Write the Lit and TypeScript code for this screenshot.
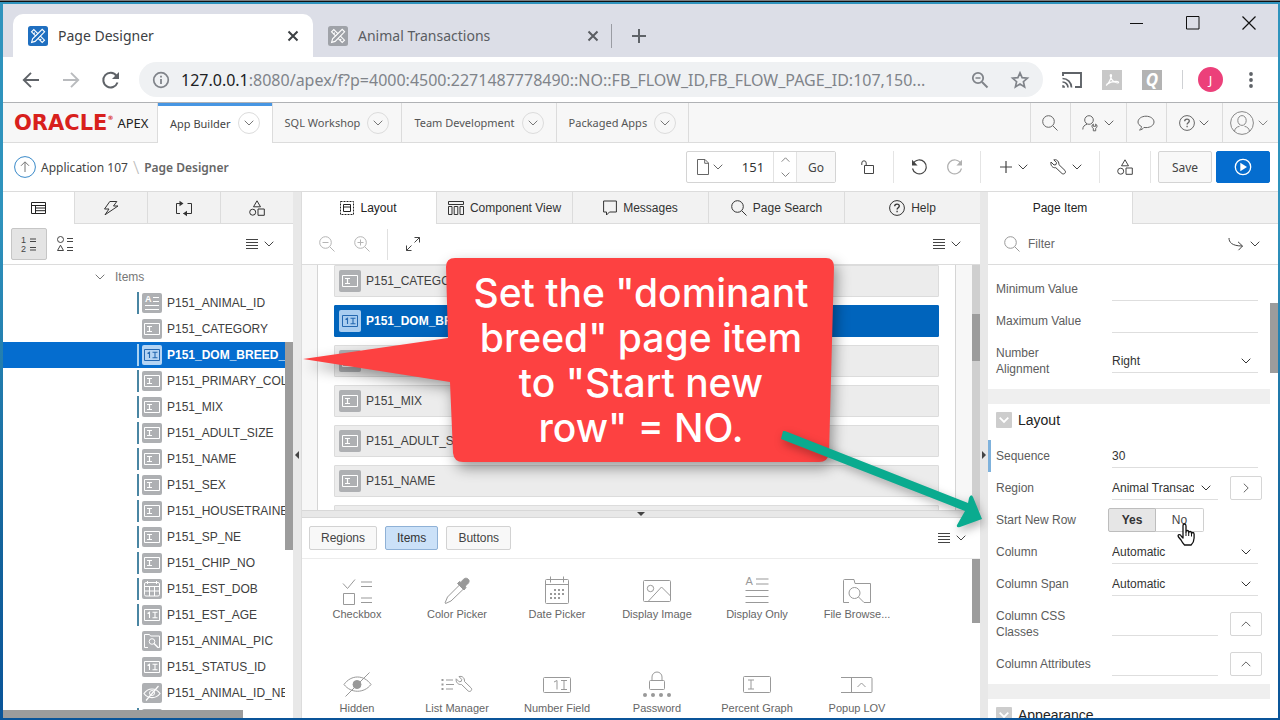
import { LitElement, html, css, svg, nothing, TemplateResult, SVGTemplateResult } from "lit";
import { customElement, property } from "lit/decorators.js";

interface Glyph {
  w: number;
  h: number;
  body: SVGTemplateResult;
}

const glyphs: Record<string, Glyph> = {
  chevron: { w: 10, h: 6, body: svg`<path d="M.7.7 5 5 9.3.7"/>` },
  chevronUp: { w: 10, h: 6, body: svg`<path d="M.7 5.2 5 .9 9.3 5.2"/>` },
  chevronRight: { w: 6, h: 10, body: svg`<path d="M.8.7 5.2 5 .8 9.3"/>` },
  fold: { w: 10, h: 6, body: svg`<path stroke-width="1.800" d="M.7.7 5 5 9.3.7"/>` },
  close: { w: 12, h: 12, body: svg`<path stroke-width="2" d="M1.5 1.5l9 9M10.5 1.5l-9 9"/>` },
  plusBold: { w: 16, h: 16, body: svg`<path stroke-width="2" d="M8 1v14M1 8h14"/>` },
  favicon: {
    w: 20, h: 20,
    body: svg`<rect width="20" height="20" rx="2.5" fill="currentColor" stroke="none"/><g stroke="#fff" stroke-width="1.1"><path d="M3.5 5.8 5.8 3.5 16.5 14.2 14.2 16.5z"/><path d="M5.5 8l1.3-1.3M8 10.500l1.300-1.300M12 14.200l1.300-1.300"/><path fill="currentColor" d="M3.600 16.400l1-3.500L14.200 3.400l2.400 2.400L7.100 15.400z"/></g>`,
  },
  back: { w: 18, h: 18, body: svg`<path stroke-width="1.900" d="M17 9H2M9 1.800 1.800 9 9 16.200"/>` },
  forward: { w: 18, h: 18, body: svg`<path stroke-width="1.900" d="M1 9h15M9 1.800 16.200 9 9 16.200"/>` },
  reload: { w: 18, h: 18, body: svg`<path stroke-width="2" d="M15.500 11.500a7.300 7.300 0 1 1-1-6.700"/><path fill="currentColor" stroke="none" d="M17 1v7h-7z"/>` },
  info: { w: 18, h: 18, body: svg`<circle cx="9" cy="9" r="7.300" stroke-width="1.700"/><path stroke-width="1.800" d="M9 8v5M9 4.800v1.800"/>` },
  zoomMinus: { w: 18, h: 18, body: svg`<circle cx="7" cy="7" r="5.200" stroke-width="1.800"/><path stroke-width="2" d="M11 11l5.500 5.500"/><path stroke-width="1.500" d="M4.500 7h5"/>` },
  star: { w: 18, h: 18, body: svg`<path stroke-width="1.700" d="M9 1.800l2.100 4.900 5.300.5-4 3.500 1.200 5.200L9 13.100l-4.600 2.800 1.200-5.200-4-3.500 5.300-.5z"/>` },
  cast: { w: 20, h: 18, body: svg`<path stroke-width="1.900" d="M1 5V2h18v14h-6"/><path stroke-width="1.700" d="M.5 7.500A9 9 0 0 1 9.500 16.500M.5 11A5.500 5.500 0 0 1 6 16.500"/><path stroke="none" fill="currentColor" d="M.300 14v2.700h2.700A2.700 2.700 0 0 0 .3 14z"/>` },
  pdf: { w: 20, h: 20, body: svg`<rect width="20" height="20" fill="#c8c8c8" stroke="none"/><path stroke="#fff" stroke-width="1.200" d="M4 15.500c2-1 5-6.500 5.500-9.500.3-2-1.500-2-1.200 0C8.800 9.500 12 12.500 15.500 13c1.500 0 1.500-1.400 0-1.500-3-.2-8 .8-11 3"/>` },
  more: { w: 4, h: 18, body: svg`<g fill="currentColor" stroke="none"><circle cx="2" cy="3" r="1.900"/><circle cx="2" cy="9" r="1.900"/><circle cx="2" cy="15" r="1.900"/></g>` },
  minimize: { w: 14, h: 14, body: svg`<path d="M0 7.500h13"/>` },
  maximize: { w: 14, h: 14, body: svg`<path d="M.5.5h12.500v12.500H.5z"/>` },
  windowClose: { w: 14, h: 14, body: svg`<path stroke-width="1.200" d="M.5.5l13 13M13.500.5l-13 13"/>` },
  search: { w: 16, h: 16, body: svg`<circle cx="6.500" cy="6.500" r="5.800"/><path d="M10.800 10.800l4.700 4.700"/>` },
  zoomOut: { w: 16, h: 16, body: svg`<circle cx="6.500" cy="6.500" r="5.800"/><path d="M10.800 10.800l4.700 4.700M3.500 6.500h6"/>` },
  zoomIn: { w: 16, h: 16, body: svg`<circle cx="6.500" cy="6.500" r="5.800"/><path d="M10.800 10.800l4.700 4.700M3.500 6.500h6M6.500 3.500v6"/>` },
  admin: { w: 18, h: 16, body: svg`<circle cx="7" cy="5" r="4.300"/><path d="M.8 14.500c0-3 1.700-4.500 4.200-5.300"/><path d="M11.300 9c-1.800 1-1.800 3.500 0 4.300v2.500h2.400v-2.500c1.800-.8 1.800-3.300 0-4.300v2.300h-2.400z"/>` },
  speech: { w: 18, h: 16, body: svg`<path d="M4.500 11.500C2.300 10.500 1 8.900 1 7c0-3.200 3.500-5.800 8-5.800S17 3.800 17 7s-3.500 5.600-8 5.600c-.7 0-1.300 0-2-.2C6 13.800 4.500 14.800 2.500 15c1.300-1 2-2.200 2-3.500z"/>` },
  help: { w: 16, h: 16, body: svg`<circle cx="8" cy="8" r="7.400"/><path stroke-width="1.300" d="M5.700 6.300c0-1.400 1-2.200 2.300-2.200s2.300.8 2.300 2c0 1.700-2.200 1.800-2.200 3.500M8.100 10.800v1.400"/>` },
  user: { w: 24, h: 24, body: svg`<circle cx="12" cy="12" r="11.400"/><ellipse cx="12" cy="9.500" rx="4.200" ry="4.900"/><path d="M4.500 20.300c.5-3 2-4.300 5-5M19.500 20.300c-.5-3-2-4.300-5-5"/>` },
  upCircle: { w: 22, h: 22, body: svg`<circle cx="11" cy="11" r="10.400" stroke="#3a8ac9"/><path stroke="#777" d="M11 16V6M7 9.800l4-4 4 4"/>` },
  page: { w: 12, h: 16, body: svg`<path d="M.5.5h7.500l3.500 3.500v11.500H.5zM7.700.6v3.700h3.700"/>` },
  unlock: { w: 14, h: 14, body: svg`<path d="M3.500 5.500h9v8h-9zM.8 5V3a2.200 2.200 0 0 1 4.400 0v2.300"/>` },
  undo: { w: 16, h: 16, body: svg`<path stroke-width="1.200" d="M2.200 4.500A7 7 0 1 1 1.500 9.500"/><path fill="currentColor" stroke="none" d="M1 .8v5.600h5.600z"/>` },
  redo: { w: 16, h: 16, body: svg`<path stroke-width="1.200" d="M13.800 4.500A7 7 0 1 0 14.500 9.500"/><path fill="currentColor" stroke="none" d="M15 .8v5.600H9.400z"/>` },
  plus: { w: 12, h: 12, body: svg`<path stroke-width="1.200" d="M6 0v12M0 6h12"/>` },
  wrench: { w: 16, h: 16, body: svg`<path d="M1 3l3 3 2-.4.500-2L3.800.8C6 .2 9 1.500 8.900 5.600L15 11.500c1.500 2-1 4.500-3 3L5.800 8.700C2.500 9.200.3 6.300 1 3z"/>` },
  shapes: { w: 16, h: 16, body: svg`<path d="M8 .8l3.500 6h-7zM9 9h6.300v6.300H9z"/><circle cx="3.700" cy="12.200" r="3"/>` },
  run: { w: 18, h: 18, body: svg`<circle cx="9" cy="9" r="7.700" stroke-width="1.300"/><path fill="currentColor" stroke="none" d="M6.300 4.800v8.400L13 9z"/>` },
  rendering: { w: 15, h: 12, body: svg`<path d="M.5.5h14v11H.5zM.5 3.500h14M4.500 3.500v8M4.500 6h10M4.500 8.700h10"/>` },
  bolt: { w: 16, h: 16, body: svg`<path d="M6.800 1.500h7L10.500 6h4.500L2 14.800 6 9H1.500z"/>` },
  process: { w: 18, h: 14, body: svg`<path d="M5 2.500H1.500v10h3.500M12.500 2.500h4v10H8.500"/><path fill="currentColor" stroke="none" d="M4.500-.2v5.400L8.500 2.500zM12 9.800v5.400L8 12.500z"/>` },
  menu: { w: 12, h: 10, body: svg`<path stroke-width="1.100" d="M0 .5h12M0 3.500h12M0 6.500h12M0 9.500h12"/>` },
  order: { w: 16, h: 16, body: svg`<g stroke="none" fill="currentColor" font-family="Liberation Sans" font-size="9"><text x="0" y="7">1</text><text x="0" y="16">2</text></g><path d="M9 3h6M9 5.500h6M9 11.500h6M9 14h6"/>` },
  group: { w: 16, h: 16, body: svg`<circle cx="3.500" cy="3.500" r="3"/><path d="M3.500 9.200l3 5.300h-6zM10 2.500h6M10 5.500h6M10 11.500h6M10 14.500h6"/>` },
  layout: { w: 14, h: 14, body: svg`<path stroke-dasharray="2 1" d="M.5.5h13v13H.5z"/><path d="M3.500 3.500h7v7h-7zM3.500 6h7"/>` },
  component: { w: 16, h: 14, body: svg`<path d="M.5.500h15v3H.5zM.5 5.500h3.500v8H.5zM6.200 5.500h3.600v8H6.200zM12 5.500h3.500v8H12z"/>` },
  message: { w: 14, h: 16, body: svg`<path d="M.6 1h12.800v11H6.500L3.500 15v-3H.6z"/>` },
  expand: { w: 16, h: 16, body: svg`<path d="M1.500 9.500v5h5M1.500 14.500l5-5M9.500 1.500h5v5M14.500 1.500l-5 5"/>` },
  goTo: { w: 16, h: 14, body: svg`<path d="M1 1c0 4 2.500 8 13.500 8M10 4.800l4.500 4.200L10.500 13.200"/>` },
  iText: { w: 20, h: 20, body: svg`<path d="M2.500 4.500h15v11h-15z"/><path stroke-width="1.200" d="M5 7.500h5M5 12.500h5M7.500 7.500v5"/>` },
  iNumber: { w: 20, h: 20, body: svg`<path d="M2.500 4.500h15v11h-15z"/><path stroke-width="1.100" d="M5.500 8.500l2-1.200v5.700M10.500 7.300h5M10.500 12.700h5M13 7.300v5.400"/>` },
  iDisplay: { w: 20, h: 20, body: svg`<text x="3" y="9" stroke="none" fill="currentColor" font-family="Liberation Sans" font-weight="700" font-size="9">A</text><path d="M11 4.500h6M11 8.500h6M3 12.500h14M3 16.500h14"/>` },
  iDate: { w: 20, h: 20, body: svg`<rect x="2.500" y="3.500" width="15" height="13.500" rx="1.500"/><path d="M2.500 7.500h15M2.500 12h15M7.500 7.500V17M12.500 7.500V17M5.500 2v3M14.500 2v3"/>` },
  iFile: { w: 20, h: 20, body: svg`<path d="M6 16.500H2.500v-13h5l1 1.500h9v11.500h-2"/><circle cx="10" cy="10.500" r="2.800"/><path stroke-width="1.400" d="M12 12.500l4 4"/>` },
  iHidden: { w: 20, h: 20, body: svg`<path stroke-width="1.200" d="M2 10.500c4-6 12-6 16 0-4 5.500-12 5.500-16 0zM4 17.500L16.500 3"/><circle cx="10" cy="10" r="2.500"/>` },
  gCheckbox: { w: 32, h: 30, body: svg`<path d="M2 8.500l4.500 5L14 4.500M20 7h11M20 11.500h11M2.500 18.500h11v11h-11zM20 23h11M20 27.500h11"/>` },
  gColor: { w: 32, h: 30, body: svg`<path d="M19 9.500L6.500 22l-2.500 6 .5.500 5.500-2.500L23 13.500"/><path fill="currentColor" d="M20 7.500c2-3.500 4.500-5.500 7-3.500s.5 5-3 7l1 1.500-2 2.500-6.500-6.500 2-2z"/>` },
  gDate: { w: 32, h: 30, body: svg`<rect x="4.500" y="4.500" width="23" height="24" rx="1"/><path d="M4.500 9.500h23M9.500 1.500v6M22.500 1.500v6"/><path stroke-width="2" stroke-dasharray="2 2" d="M13 15h11M9 19h14M9 23h10"/>` },
  gImage: { w: 32, h: 30, body: svg`<rect x="2.500" y="5.500" width="27" height="21" rx="1"/><circle cx="9.500" cy="13.500" r="3.200"/><path d="M7.500 26l13-14 9 9"/>` },
  gDisplay: { w: 32, h: 30, body: svg`<text x="4.500" y="10" stroke="none" fill="currentColor" font-family="Liberation Sans" font-size="11">A</text><path d="M15 4h12.500M15 9h12.500M4.500 15.500h23M4.500 21.500h23M4.500 27.500h23"/>` },
  gFile: { w: 32, h: 30, body: svg`<path d="M8 27.500H2.500V5.500q0-1 1-1h9.500l1 4h15.500v19h-3.500"/><circle cx="13.500" cy="18" r="5.500"/><path d="M17.500 22l5.500 5.500h3"/>` },
  gHidden: { w: 32, h: 30, body: svg`<path d="M3 15.500c7-10 20-10 27 0-7 9-20 9-27 0zM4.500 27.500L28.500 3.500"/><circle cx="16" cy="15.500" r="4" fill="currentColor"/>` },
  gList: { w: 32, h: 30, body: svg`<path stroke-width="2" stroke-dasharray="2 2.500" d="M1.500 10v11"/><path d="M5 11h7M5 15.500h8M5 20h7M15.200 9.800l3 3 2-.4.500-2L18 7.600c2.500-.8 5.800.6 5.500 4.900l6.700 6.500c1.500 2-1 4.500-3 3l-6.700-6.500c-3.300.5-6-2.400-5.300-5.700z"/>` },
  gNumber: { w: 32, h: 30, body: svg`<rect x="2.500" y="8.500" width="27" height="15" rx="1"/><path d="M13 13l3-1.500v9M20 11.500h6M20 20.500h6M23 11.500v9"/>` },
  gPassword: { w: 32, h: 30, body: svg`<rect x="8.500" y="11.500" width="15" height="9" rx="1"/><path d="M11 11.500V8a5 5 0 0 1 10 0v3.500"/><g fill="currentColor" stroke="none"><circle cx="4" cy="26" r="2"/><circle cx="12" cy="26" r="2"/><circle cx="20" cy="26" r="2"/><circle cx="28" cy="26" r="2"/></g>` },
  gPercent: { w: 32, h: 30, body: svg`<rect x="2.500" y="7.500" width="27" height="16" rx="1"/><path d="M7 11h6M7 20h6M10 11v9"/>` },
  gPopup: { w: 32, h: 30, body: svg`<path d="M0 8.500h30q1 0 1 1v13q0 1-1 1H0M10.500 8.500v15M16.500 18l4-4 4 4"/>` },
};

const icon = (name: string, scale = 1): TemplateResult => {
  const g = glyphs[name];
  return html`<svg width=${g.w * scale} height=${g.h * scale} viewBox="0 0 ${g.w} ${g.h}" fill="none" stroke="currentColor" overflow="visible" aria-hidden="true">${g.body}</svg>`;
};

const shared = css`
  * { box-sizing: border-box; }
  svg { display: block; flex: none; }
  button, input, select {
    font: inherit;
    color: inherit;
    background: none;
    border: 0;
    border-radius: 0;
    margin: 0;
    padding: 0;
    outline: 0;
    min-width: 0;
  }
  button {
    display: flex;
    align-items: center;
    justify-content: center;
    gap: 6px;
    white-space: nowrap;
  }
`;

@customElement("browser-chrome")
export class BrowserChrome extends LitElement {
  static styles = [
    shared,
    css`
      :host { display: block; color: #5f6368; font-family: "Noto Sans", "Open Sans", sans-serif; }
      .strip { display: flex; background: #dcdee7; height: 53px; padding-left: 10px; }
      .tab { display: flex; align-items: center; gap: 10px; width: 300px; margin-top: 10px; padding: 0 14px 0 15px; font-size: 14px; color: #5a5d62; }
      .tab.on { background: #fff; border-radius: 10px 10px 0 0; color: #3c4043; }
      .favicon { color: #9fa2a8; }
      .on .favicon { color: #1f6fc0; }
      .tab span { flex: 1; white-space: nowrap; }
      .new { margin: 10px 0 0 0; padding: 0 0 0 19px; }
      .tabline { width: 1px; height: 24px; background: #9a9ca3; margin: 20px 0 0 -2px; }
      .controls { display: flex; gap: 42px; margin: 12px 22px 0 auto; color: #111; height: 14px; }
      .bar { display: flex; align-items: center; background: #fff; height: 46px; border-bottom: 1px solid #b0b2b5; padding: 0 25px 0 19px; gap: 22px; }
      .dim { color: #b9bbbe; }
      .address { display: flex; align-items: center; flex: 1; height: 35px; border-radius: 18px; background: #eff1f3; padding: 0 14px 0 13px; margin-left: -3px; font-size: 16px; color: #80848a; }
      .host { color: #202124; padding-left: 11px; }
      .address input { flex: 1; text-overflow: ellipsis; }
      .address button + button { margin-left: 22px; }
      .tools { display: flex; align-items: center; gap: 20px; margin-left: -3px; }
      .quick { width: 20px; height: 20px; background: #b3b3b3; color: #fff; font: italic 700 17px "Open Sans", sans-serif; }
      .avatar { width: 25px; height: 25px; border-radius: 50%; background: #ec407a; color: #fff; font-size: 13px; }
      .line { width: 1px; height: 19px; background: #cfd1d4; }
      .last { display: flex; align-items: center; gap: 26px; margin-left: -5px; }
    `,
  ];

  render() {
    return html`
      <div class="strip">
        <div class="tab on"><i class="favicon">${icon("favicon")}</i><span>Page Designer</span><button aria-label="Close tab">${icon("close")}</button></div>
        <div class="tab"><i class="favicon">${icon("favicon")}</i><span>Animal Transactions</span><button aria-label="Close tab">${icon("close")}</button></div>
        <div class="tabline"></div>
        <button class="new" aria-label="New tab">${icon("plusBold")}</button>
        <div class="controls">
          <button aria-label="Minimize">${icon("minimize")}</button>
          <button aria-label="Maximize">${icon("maximize")}</button>
          <button aria-label="Close">${icon("windowClose")}</button>
        </div>
      </div>
      <div class="bar">
        <button aria-label="Back">${icon("back")}</button>
        <button class="dim" aria-label="Forward">${icon("forward")}</button>
        <button aria-label="Reload">${icon("reload")}</button>
        <div class="address">
          ${icon("info")}
          <label class="host" for="url">127.0.0.1</label>
          <input id="url" value=":8080/apex/f?p=4000:4500:2271487778490::NO::FB_FLOW_ID,FB_FLOW_PAGE_ID:107,150..." />
          <button aria-label="Zoom">${icon("zoomMinus")}</button>
          <button aria-label="Bookmark">${icon("star")}</button>
        </div>
        <div class="tools">
          <button aria-label="Cast">${icon("cast")}</button>
          <button aria-label="PDF">${icon("pdf")}</button>
          <button class="quick">Q</button>
          <div class="line"></div>
          <div class="last">
            <button class="avatar">J</button>
            <button aria-label="Menu">${icon("more")}</button>
          </div>
        </div>
      </div>
    `;
  }
}

@customElement("apex-header")
export class ApexHeader extends LitElement {
  static styles = [
    shared,
    css`
      :host { display: block; background: #fff; color: #555; font-family: "Noto Sans", "Open Sans", sans-serif; font-size: 11px; }
      nav { display: flex; height: 40px; background: #f7f7f7; border-bottom: 1px solid #dcdcdc; }
      .logo { display: flex; align-items: center; gap: 4px; width: 154px; padding-left: 11px; color: #222; font-size: 13px; text-decoration: none; }
      .oracle { display: flex; color: #d8201c; font: 700 21px/22px "DejaVu Sans", sans-serif; }
      .oracle small { font-size: 6px; line-height: 12px; }
      .menu { display: flex; align-items: center; gap: 7px; border-left: 1px solid #dcdcdc; padding: 0 12px; }
      .menu.end { border-right: 1px solid #dcdcdc; }
      .menu.on { background: #fff; color: #444; box-shadow: inset 0 3px #4796e3; margin-bottom: -1px; }
      .menu a { color: inherit; text-decoration: none; white-space: nowrap; }
      .drop { width: 22px; height: 22px; border: 1px solid #dcdcdc; border-radius: 50%; color: #777; }
      .fill { flex: 1; }
      .tool { width: 40px; border-left: 1px solid #dcdcdc; color: #666; gap: 4px; padding-right: 1px; }
      .wide { width: 56px; }
      .user { color: #888; padding-right: 3px; }
      .row { display: flex; align-items: center; height: 48px; padding: 0 8px 0 11px; }
      .crumbs { display: flex; align-items: center; gap: 5px; flex: 1; font-size: 12px; color: #444; }
      .crumbs a { color: inherit; text-decoration: none; }
      .slash { color: #bbb; font-size: 18px; font-weight: 300; }
      .current { font-weight: 600; color: #666; }
      .pagebox { display: flex; height: 32px; border: 1px solid #d4d4d4; border-radius: 2px; margin-right: 14px; }
      .pick { width: 46px; gap: 4px; color: #666; }
      .pagebox input { width: 40px; text-align: center; font-size: 13px; color: #333; }
      .spin { display: flex; flex-direction: column; width: 24px; border: solid #e2e2e2; border-width: 0 1px; color: #777; }
      .spin button { flex: 1; }
      .go { width: 38px; background: #f8f8f8; font-size: 12px; color: #444; }
      .act { width: 36px; height: 32px; color: #444; }
      .act.pair { width: 52px; }
      .off { color: #b0b0b0; }
      .sep { width: 1px; height: 32px; background: #e4e4e4; margin: 0 7px; }
      .save, .run { width: 54px; height: 32px; border: 1px solid #d4d4d4; border-radius: 2px; background: #f8f8f8; color: #444; font-size: 12px; }
      .run { margin-left: 4px; background: #056dcf; border-color: #056dcf; color: #fff; }
    `,
  ];

  render() {
    const menus = ["App Builder", "SQL Workshop", "Team Development", "Packaged Apps"];
    return html`
      <nav>
        <a class="logo" href="#"><span class="oracle">ORACLE<small>®</small></span><span>APEX</span></a>
        ${menus.map(
          (m, i) => html`<div class="menu ${i === 0 ? "on" : i === 3 ? "end" : ""}">
            <a href="#">${m}</a><button class="drop" aria-label="${m} menu">${icon("chevron")}</button>
          </div>`
        )}
        <div class="fill"></div>
        <button class="tool" aria-label="Search">${icon("search")}</button>
        <button class="tool wide" aria-label="Administration">${icon("admin")}${icon("chevron")}</button>
        <button class="tool" aria-label="Feedback">${icon("speech")}</button>
        <button class="tool wide" aria-label="Help">${icon("help")}${icon("chevron")}</button>
        <button class="tool wide user" aria-label="Account">${icon("user")}${icon("chevron")}</button>
      </nav>
      <div class="row">
        <div class="crumbs">
          ${icon("upCircle")}<a href="#">Application 107</a><span class="slash">\\</span><span class="current">Page Designer</span>
        </div>
        <div class="pagebox">
          <button class="pick" aria-label="Page finder">${icon("page")}${icon("chevron")}</button>
          <input aria-label="Page number" value="151" />
          <div class="spin">
            <button aria-label="Next page">${icon("chevronUp", 0.9)}</button>
            <button aria-label="Previous page">${icon("chevron", 0.9)}</button>
          </div>
          <button class="go">Go</button>
        </div>
        <button class="act" aria-label="Lock">${icon("unlock")}</button>
        <div class="sep"></div>
        <button class="act" aria-label="Undo">${icon("undo")}</button>
        <button class="act off" aria-label="Redo">${icon("redo")}</button>
        <div class="sep"></div>
        <button class="act pair" aria-label="Create">${icon("plus")}${icon("chevron")}</button>
        <button class="act pair" aria-label="Utilities">${icon("wrench")}${icon("chevron")}</button>
        <div class="sep"></div>
        <button class="act" aria-label="Shared components">${icon("shapes")}</button>
        <div class="sep"></div>
        <button class="save">Save</button>
        <button class="run" aria-label="Run page">${icon("run")}</button>
      </div>
    `;
  }
}

const panelStyles = css`
  :host { display: flex; flex-direction: column; min-width: 0; min-height: 0; background: #fff; overflow: hidden; position: relative; }
  .tabs { display: flex; flex: none; height: 32px; color: #333; }
  .tabs button { flex: 1; background: #f2f2f2; border: solid #dcdcdc; border-width: 0 0 1px 1px; color: inherit; }
  .tabs button.on { background: #fff; border-color: transparent; color: #222; }
  .tabs button.on + button { border-left-color: #dcdcdc; }
  .bar { display: flex; align-items: center; flex: none; height: 41px; border-bottom: 1px solid #dcdcdc; color: #444; }
  .bar .end { margin-left: auto; }
  .thumb { position: absolute; background: #9c9c9c; }
`;

@customElement("rendering-tree")
export class RenderingTree extends LitElement {
  static styles = [
    shared,
    panelStyles,
    css`
      .tabs { margin-left: -2px; }
      .bar { padding: 0 19px 0 8px; }
      .mode { width: 36px; height: 32px; }
      .mode.on { background: #e4e4e4; border: 1px solid #c6c6c6; border-radius: 2px; }
      ul { flex: 1; margin: -1px 8px 0 0; padding: 0; list-style: none; overflow: hidden; color: #404040; }
      li { display: flex; align-items: center; height: 26px; gap: 5px; padding-left: 134px; white-space: nowrap; }
      .head { padding-left: 92px; gap: 10px; color: #777; }
      .node { width: 20px; height: 20px; border-radius: 2px; background: #aeb0b3; color: #fff; flex: none; margin-left: 5px; }
      .mark { border-left: 2px solid #4a86a3; padding-left: 3px; height: 22px; display: flex; align-items: center; }
      .mark .node { margin-left: 0; }
      li.on { background: #056dcf; color: #fff; font-weight: 700; }
      .on .node { background: #b5d4f3; color: #2568b0; }
      .on .mark { border-color: #a9d2f2; }
      .down { right: 0; top: 150px; width: 8px; height: 208px; }
      .across { left: 0; bottom: 0; width: 240px; height: 8px; }
    `,
  ];

  render() {
    const rows: [string, string, boolean][] = [
      ["P151_ANIMAL_ID", "iDisplay", true],
      ["P151_CATEGORY", "iText", false],
      ["P151_DOM_BREED_ID", "iNumber", true],
      ["P151_PRIMARY_COLOR", "iText", true],
      ["P151_MIX", "iText", true],
      ["P151_ADULT_SIZE", "iText", true],
      ["P151_NAME", "iText", true],
      ["P151_SEX", "iText", true],
      ["P151_HOUSETRAINED", "iText", true],
      ["P151_SP_NE", "iText", true],
      ["P151_CHIP_NO", "iText", true],
      ["P151_EST_DOB", "iDate", true],
      ["P151_EST_AGE", "iNumber", true],
      ["P151_ANIMAL_PIC", "iFile", false],
      ["P151_STATUS_ID", "iNumber", false],
      ["P151_ANIMAL_ID_NEXT", "iHidden", false],
      ["", "iText", true],
    ];
    return html`
      <div class="tabs">
        <button class="on" aria-label="Rendering">${icon("rendering")}</button>
        <button aria-label="Dynamic actions">${icon("bolt")}</button>
        <button aria-label="Processing">${icon("process")}</button>
        <button aria-label="Shared components">${icon("shapes")}</button>
      </div>
      <div class="bar">
        <button class="mode on" aria-label="Processing order">${icon("order")}</button>
        <button class="mode" aria-label="Component type">${icon("group")}</button>
        <button class="end" aria-label="Menu">${icon("menu")}${icon("chevron")}</button>
      </div>
      <ul>
        <li class="head">${icon("chevron")}<span>Items</span></li>
        ${rows.map(
          ([label, glyph, marked], i) => html`<li class=${i === 2 ? "on" : ""}>
            <div class=${marked ? "mark" : ""}><div class="node">${icon(glyph)}</div></div><span>${label}</span>
          </li>`
        )}
      </ul>
      <div class="thumb down"></div>
      <div class="thumb across"></div>
    `;
  }
}

@customElement("layout-panel")
export class LayoutPanel extends LitElement {
  static styles = [
    shared,
    panelStyles,
    css`
      :host { border-left: 1px solid #dcdcdc; }
      .tabs { margin-left: -2px; }
      .bar { padding: 0 19px 0 17px; gap: 19px; }
      .off { color: #b5b5b5; }
      .line { width: 1px; height: 31px; background: #e0e0e0; margin: 0 -2px; }
      .canvas { flex: 1; min-height: 0; position: relative; background: #f7f7f7; padding: 0 24px 0 15px; overflow: hidden; }
      .sheet { background: #fff; border: solid #d5d5d5; border-width: 0 1px; padding: 0 16px; }
      .item { display: flex; align-items: center; gap: 5px; height: 32px; margin-bottom: 8px; padding: 0 4px; background: #ececec; border: 1px solid #dcdcdc; border-radius: 1px; color: #404040; }
      .tile { display: flex; align-items: center; justify-content: center; width: 22px; height: 22px; border-radius: 2px; background: #aeb0b3; color: #fff; }
      .item.on { background: #0064bc; border-color: #0064bc; color: #fff; font-weight: 700; }
      .on .tile { background: #a9cdf0; color: #2568b0; }
      .track { position: absolute; right: 0; top: 0; bottom: 0; width: 8px; background: #cfcfcf; }
      .track .thumb { top: 49px; width: 8px; height: 47px; }
      .split { flex: none; display: flex; justify-content: center; align-items: center; height: 8px; background: #e8e8e8; border: solid #d8d8d8; border-width: 1px 0; color: #444; }
      .gallery { flex: none; height: 200px; position: relative; overflow: hidden; }
      .gbar { display: flex; align-items: center; gap: 8px; height: 41px; border-bottom: 1px solid #ececec; padding: 0 14px 0 7px; color: #444; }
      .gbar .kind { height: 24px; padding: 0 11px; border: 1px solid #d2d2d2; border-radius: 2px; background: #f8f8f8; }
      .gbar .kind.on { background: #cbe1f8; border-color: #8fb1d6; color: #333; }
      .gbar .end { margin-left: auto; }
      .grid { display: grid; grid-template-columns: repeat(auto-fill, 100px); grid-auto-rows: 94px; padding: 16px 14px 0 5px; font-size: 11px; color: #666; }
      .cell { display: flex; flex-direction: column; align-items: center; gap: 2px; color: #999; }
      .cell span { color: #666; line-height: 14px; }
      .gallery > .thumb { right: 0; top: 41px; width: 8px; height: 64px; }
    `,
  ];

  render() {
    const tabs = [
      ["Layout", "layout"],
      ["Component View", "component"],
      ["Messages", "message"],
      ["Page Search", "search"],
      ["Help", "help"],
    ];
    const items = ["P151_CATEGORY", "P151_DOM_BREED_ID", "P151_PRIMARY_COLOR", "P151_MIX", "P151_ADULT_SIZE", "P151_NAME", "P151_SEX"];
    const kinds = [
      ["Checkbox", "gCheckbox"],
      ["Color Picker", "gColor"],
      ["Date Picker", "gDate"],
      ["Display Image", "gImage"],
      ["Display Only", "gDisplay"],
      ["File Browse...", "gFile"],
      ["Hidden", "gHidden"],
      ["List Manager", "gList"],
      ["Number Field", "gNumber"],
      ["Password", "gPassword"],
      ["Percent Graph", "gPercent"],
      ["Popup LOV", "gPopup"],
    ];
    return html`
      <div class="tabs">
        ${tabs.map(([t, g], i) => html`<button class=${i === 0 ? "on" : ""}>${icon(g)}${t}</button>`)}
      </div>
      <div class="bar">
        <button class="off" aria-label="Zoom out">${icon("zoomOut")}</button>
        <button class="off" aria-label="Zoom in">${icon("zoomIn")}</button>
        <div class="line"></div>
        <button aria-label="Expand">${icon("expand")}</button>
        <button class="end" aria-label="Menu">${icon("menu")}${icon("chevron")}</button>
      </div>
      <div class="canvas">
        <div class="sheet">
          ${items.map(
            (t, i) => html`<div class="item ${i === 1 ? "on" : ""}">
              <div class="tile">${icon(i === 1 ? "iNumber" : "iText")}</div><span>${t}</span>
            </div>`
          )}
        </div>
        <div class="track"><div class="thumb"></div></div>
      </div>
      <div class="split"><svg width="8" height="4" viewBox="0 0 8 4"><path d="M0 0h8L4 4z" fill="currentColor" /></svg></div>
      <div class="gallery">
        <div class="gbar">
          <button class="kind">Regions</button><button class="kind on">Items</button><button class="kind">Buttons</button>
          <button class="end" aria-label="Menu">${icon("menu")}${icon("chevron")}</button>
        </div>
        <div class="grid">
          ${kinds.map(([t, g]) => html`<div class="cell">${icon(g)}<span>${t}</span></div>`)}
        </div>
        <div class="thumb"></div>
      </div>
    `;
  }
}

@customElement("property-field")
export class PropertyField extends LitElement {
  @property() label = "";
  @property() kind = "text";
  @property() value = "";
  @property() action = "";
  @property({ type: Boolean }) changed = false;

  static styles = [
    shared,
    css`
      :host { display: block; }
      .row { display: flex; align-items: center; min-height: 32px; padding: 0 12px 0 8px; }
      .row.changed { box-shadow: inset 3px 0 #7fb2dc; }
      .caption { width: 116px; flex: none; padding: 8px 24px 8px 0; line-height: 16px; color: #5c5c5c; }
      .row.long .caption { padding-right: 0; }
      .box { display: flex; align-items: center; flex: 1; height: 24px; min-width: 0; border-bottom: 1px solid #dedede; color: #333; }
      .box input, .box select { flex: 1; width: 0; height: 23px; appearance: none; }
      .drop svg { margin: 0 7px; }
      .more { width: 32px; height: 24px; margin: 0 -4px 0 12px; border: 1px solid #d6d6d6; border-radius: 2px; color: #666; }
      .pills { display: flex; height: 24px; margin-left: -4px; }
      .pills label { display: flex; align-items: center; justify-content: center; width: 48px; border: 1px solid #d0d0d0; border-radius: 0 2px 2px 0; color: #444; }
      .pills label:first-of-type { background: #e6e6e6; border-color: #bdbdbd; border-radius: 2px 0 0 2px; font-weight: 700; color: #333; }
      .pills label + input + label { border-left: 0; }
      .pills input { position: absolute; opacity: 0; pointer-events: none; }
    `,
  ];

  private control() {
    if (this.kind === "toggle") {
      return html`<div class="pills" role="radiogroup" aria-label=${this.label}>
        <input type="radio" id="yes" name="choice" checked /><label for="yes">Yes</label>
        <input type="radio" id="no" name="choice" /><label for="no">No</label>
      </div>`;
    }
    if (this.kind === "select") {
      return html`<div class="box drop"><select id="field"><option>${this.value}</option></select>${icon("chevron")}</div>`;
    }
    return html`<div class="box"><input id="field" .value=${this.value} /></div>`;
  }

  render() {
    return html`<div class="row ${this.changed ? "changed" : ""} ${this.label === "Column Attributes" ? "long" : ""}">
      <label class="caption" for="field">${this.label}</label>
      ${this.control()}
      ${this.action ? html`<button class="more" aria-label="${this.label} details">${icon(this.action)}</button>` : nothing}
    </div>`;
  }
}

@customElement("property-editor")
export class PropertyEditor extends LitElement {
  static styles = [
    shared,
    panelStyles,
    css`
      .tabs button { flex: none; width: 144px; border-left: 0; }
      .rest { flex: 1; background: #f2f2f2; border: solid #dcdcdc; border-width: 0 0 1px 1px; }
      .bar { padding: 0 18px 0 16px; gap: 8px; }
      .bar > svg { color: #999; }
      .bar input { flex: 1; color: #444; }
      .bar input::placeholder { color: #666; opacity: 1; }
      .list { flex: 1; min-height: 0; overflow: hidden; padding: 8px 8px 0 0; }
      .gap { height: 15px; background: #efefef; margin-top: 4px; }
      .group { display: flex; align-items: center; gap: 6px; height: 32px; margin-bottom: 4px; padding-left: 8px; font-size: 14px; color: #222; }
      .fold { width: 16px; height: 16px; background: #cdcdcd; border-radius: 1px; color: #fff; }
      .thumb { right: 0; top: 111px; width: 8px; height: 70px; }
    `,
  ];

  private group(name: string) {
    return html`<div class="gap"></div>
      <div class="group"><button class="fold" aria-label="Collapse ${name}">${icon("fold")}</button><span>${name}</span></div>`;
  }

  render() {
    return html`
      <div class="tabs"><button class="on">Page Item</button><div class="rest"></div></div>
      <div class="bar">
        ${icon("search")}<input aria-label="Filter" placeholder="Filter" />
        <button aria-label="Go to group">${icon("goTo")}${icon("chevron")}</button>
      </div>
      <div class="list">
        <property-field label="Minimum Value"></property-field>
        <property-field label="Maximum Value"></property-field>
        <property-field label="Number Alignment" kind="select" value="Right"></property-field>
        ${this.group("Layout")}
        <property-field label="Sequence" value="30" changed></property-field>
        <property-field label="Region" kind="select" value="Animal Transactions" action="chevronRight"></property-field>
        <property-field label="Start New Row" kind="toggle"></property-field>
        <property-field label="Column" kind="select" value="Automatic"></property-field>
        <property-field label="Column Span" kind="select" value="Automatic"></property-field>
        <property-field label="Column CSS Classes" action="chevronUp"></property-field>
        <property-field label="Column Attributes" action="chevronUp"></property-field>
        ${this.group("Appearance")}
      </div>
      <div class="thumb"></div>
    `;
  }
}

@customElement("tutorial-callout")
export class TutorialCallout extends LitElement {
  static styles = css`
    :host { display: block; pointer-events: none; }
    .shape, .pointer, .hand, .words { position: absolute; }
    .shape { left: 300px; top: 250px; filter: drop-shadow(3px 6px 7px rgba(0, 0, 0, 0.4)); }
    .pointer { left: 770px; top: 420px; filter: drop-shadow(2px 4px 5px rgba(0, 0, 0, 0.3)); }
    .hand { left: 1177px; top: 523px; }
    .words { left: 446px; top: 270px; width: 390px; margin: 0; text-align: center; color: #fff; font: 500 39px/45px "Inter", sans-serif; white-space: pre-line; }
  `;

  render() {
    return html`
      <svg class="shape" width="540" height="220" viewBox="0 0 540 220" aria-hidden="true">
        <path fill="#fd4141" d="M155 8H526Q534 8 534 17L529 203Q528 212 519 212H163Q154 212 153 203L150 132 3 109 148 88 146 17Q146 8 155 8z" />
      </svg>
      <p class="words">${'Set the "dominant\nbreed" page item\nto "Start new\nrow" = NO.'}</p>
      <svg class="pointer" width="220" height="110" viewBox="0 0 220 110" aria-hidden="true">
        <path fill="#0aab8f" d="M13 11 11 19 195 91 187 105Q186 108 190 107L212 99 203 77Q201 73 199 78L198 83 15 11z" />
      </svg>
      <svg class="hand" width="20" height="24" viewBox="0 0 20 24" aria-hidden="true">
        <path fill="#fff" stroke="#111" stroke-width="1.300" stroke-linejoin="round" d="M6 15V3q0-2 1.500-2T9 3v6q0-1.500 1.300-1.500T11.700 9v.7q.2-1.200 1.400-1.200t1.400 1.400v.8q.2-1.200 1.300-1.200t1.300 1.500V15q0 4-3 7H7.500Q5.500 20 4 17L1.500 14q-1-2 .5-2.300T4.500 13.500z" />
        <path stroke="#111" d="M9 9v4M11.700 10v3M14.500 11v2.500" />
      </svg>
    `;
  }
}

@customElement("app-root")
export class AppRoot extends LitElement {
  static styles = css`
    :host {
      display: flex;
      flex-direction: column;
      box-sizing: border-box;
      height: 100vh;
      min-height: 480px;
      position: relative;
      overflow: hidden;
      padding: 4px 2px 2px 3px;
      background: linear-gradient(#7a7d80 0 1px, #111 1px 2px, #2f93bd 2px 4px, #2f93bd 30%, #14649c 75%, #0a5499);
      font: 12px "Liberation Sans", Arial, sans-serif;
    }
    main { flex: 1; min-height: 0; display: grid; grid-template-columns: 290px 8px minmax(0, 1fr) 8px 290px; grid-template-rows: minmax(0, 1fr); border-top: 1px solid #dcdcdc; }
    .split { background: #e8e8e8; display: flex; align-items: center; justify-content: center; color: #444; }
  `;

  render() {
    return html`
      <browser-chrome></browser-chrome>
      <apex-header></apex-header>
      <main>
        <rendering-tree></rendering-tree>
        <div class="split"><svg width="4" height="8" viewBox="0 0 4 8"><path d="M4 0v8L0 4z" fill="currentColor" /></svg></div>
        <layout-panel></layout-panel>
        <div class="split"><svg width="4" height="8" viewBox="0 0 4 8"><path d="M0 0v8l4-4z" fill="currentColor" /></svg></div>
        <property-editor></property-editor>
      </main>
      <tutorial-callout></tutorial-callout>
    `;
  }
}
